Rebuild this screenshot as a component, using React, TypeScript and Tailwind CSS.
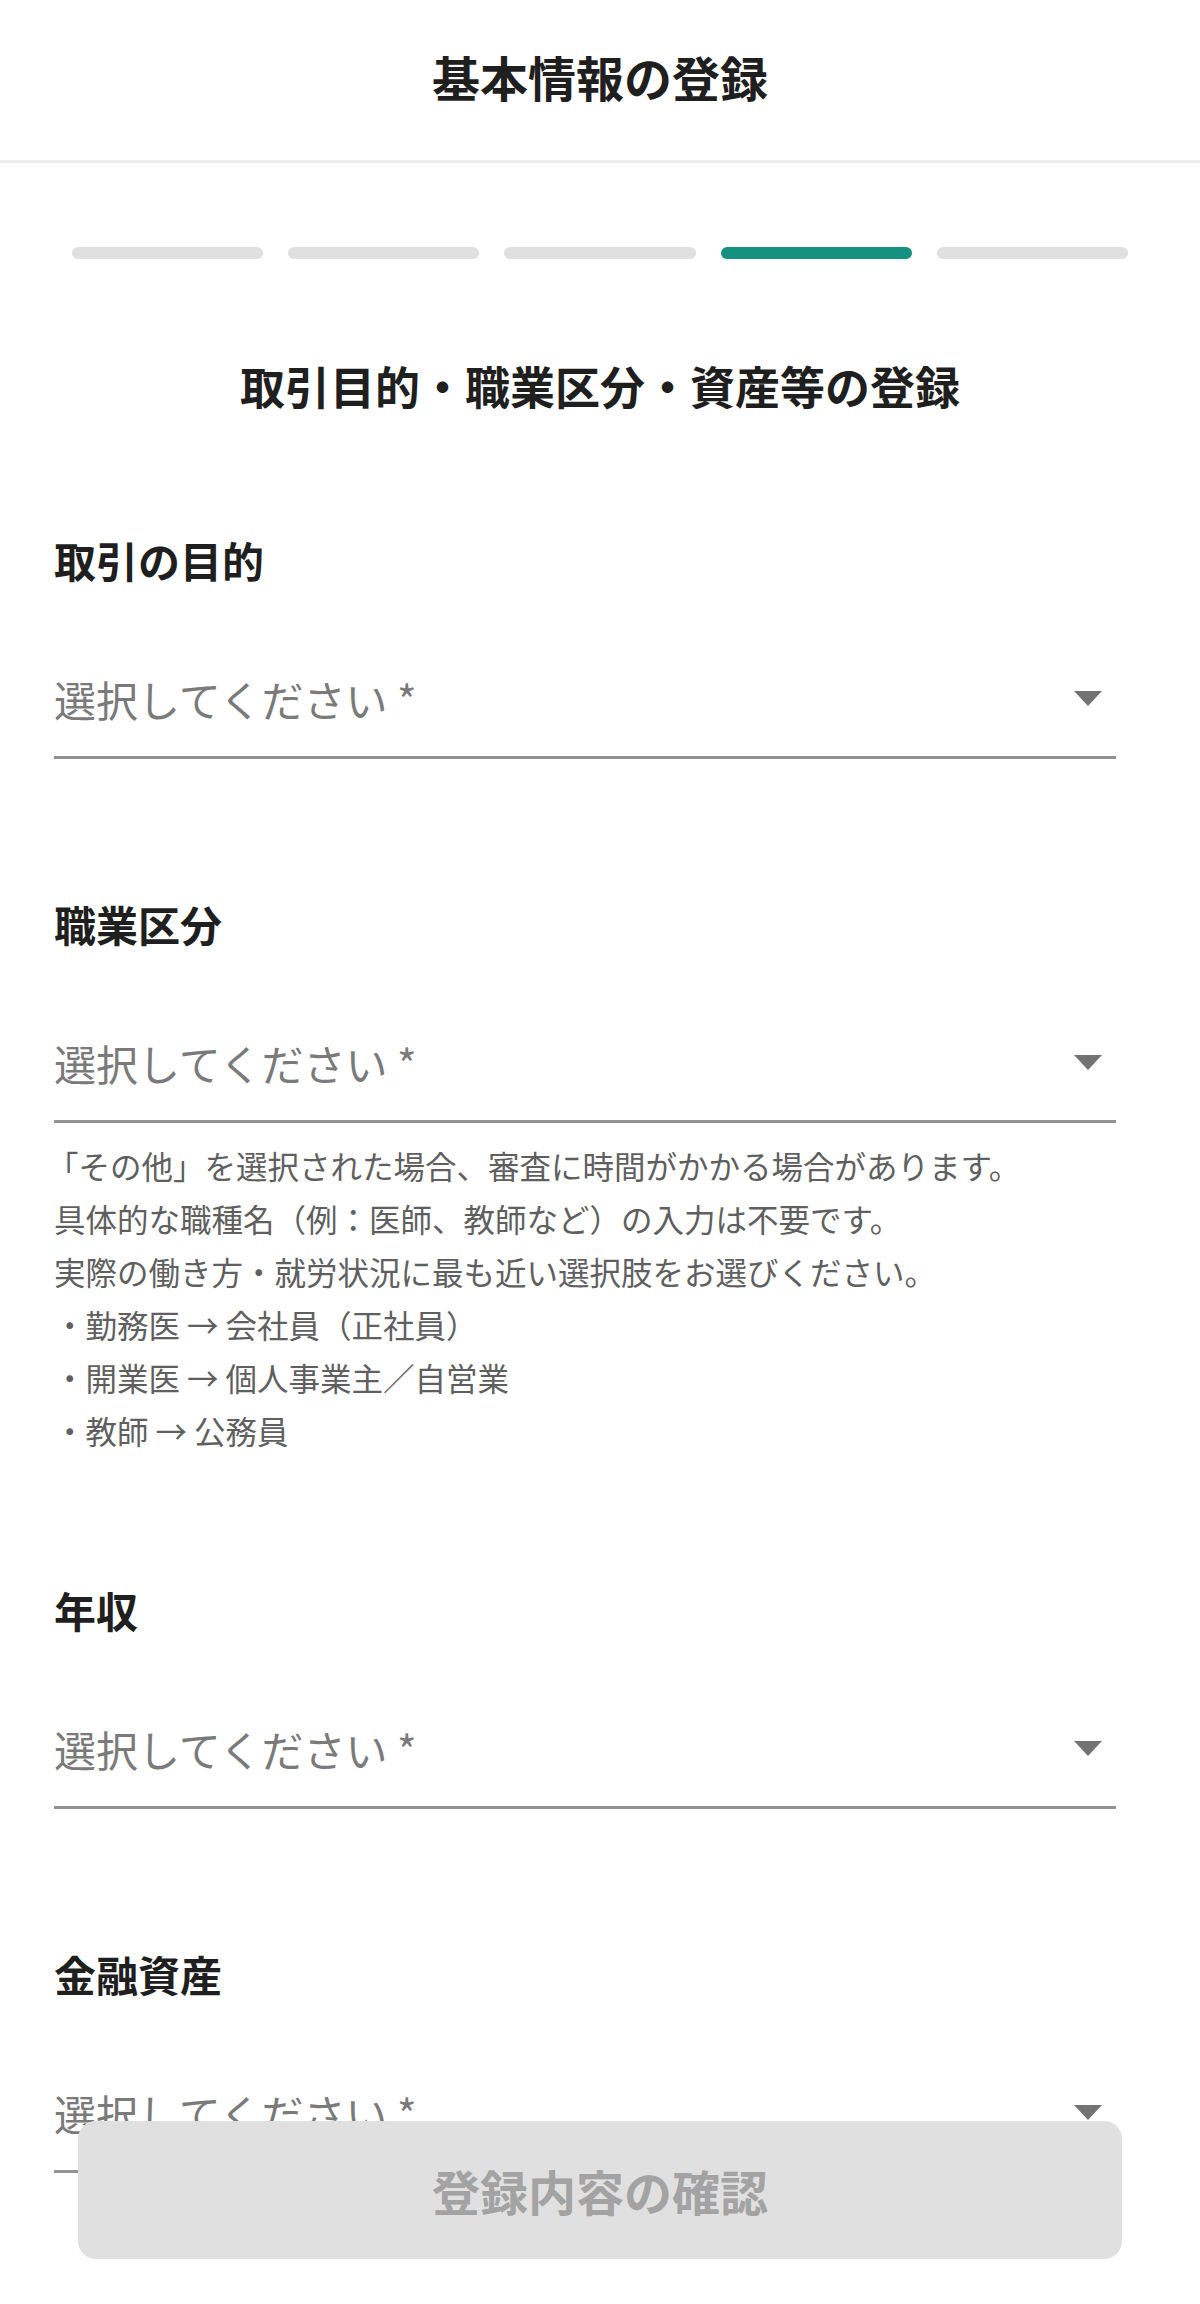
import React from "react";

const FONT = "font-[family-name:'Noto_Sans_CJK_JP','Noto_Sans',sans-serif]";

const STEPS = [false, false, false, true, false];

function SelectField({ mt }: { mt: string }) {
  return (
    <div className={`${mt} flex items-center justify-between border-b-[3px] border-[#929292] pb-[26px]`}>
      <span className="text-[42px] leading-[63px] text-[#7a7a7a]">選択してください *</span>
      <svg width="28" height="15" viewBox="0 0 28 15" className="mr-[14px]">
        <path d="M0 0 H28 L14 15 Z" fill="#737373" />
      </svg>
    </div>
  );
}

function Label({ text, mt }: { text: string; mt: string }) {
  return <h3 className={`${mt} text-[42px] leading-[60px] font-bold text-[#1f1f1f]`}>{text}</h3>;
}

export default function App() {
  return (
    <div className={`${FONT} min-h-screen bg-white`}>
      {/* header */}
      <header className="h-[163px] border-b-[3px] border-[#ebebeb] pb-[8px] flex items-center justify-center">
        <h1 className="text-[48px] leading-[72px] font-bold text-[#1f1f1f]">基本情報の登録</h1>
      </header>

      {/* progress */}
      <div className="mt-[84px] px-[72px] flex gap-[25px]">
        {STEPS.map((active, i) => (
          <div
            key={i}
            className={`flex-1 h-[12px] rounded-full ${active ? "bg-[#17917f]" : "bg-[#e0e0e0]"}`}
          />
        ))}
      </div>

      <h2 className="mt-[94px] text-center text-[45px] leading-[66px] font-bold text-[#1f1f1f]">
        取引目的・職業区分・資産等の登録
      </h2>

      <div className="pl-[54px] pr-[84px]">
        <Label text="取引の目的" mt="mt-[111px]" />
        <SelectField mt="mt-[77px]" />

        <Label text="職業区分" mt="mt-[135px]" />
        <SelectField mt="mt-[77px]" />
        <div className="mt-[16px] text-[31.5px] leading-[53px] text-[#5f5f5f]">
          <p className="-ml-[7px]">「その他」を選択された場合、審査に時間がかかる場合があります。</p>
          <p>具体的な職種名（例：医師、教師など）の入力は不要です。</p>
          <p>実際の働き方・就労状況に最も近い選択肢をお選びください。</p>
          <p>・勤務医 → 会社員（正社員）</p>
          <p>・開業医 → 個人事業主／自営業</p>
          <p>・教師 → 公務員</p>
        </div>

        <Label text="年収" mt="mt-[123px]" />
        <SelectField mt="mt-[77px]" />

        <Label text="金融資産" mt="mt-[135px]" />
        <SelectField mt="mt-[77px]" />
      </div>

      {/* bottom action */}
      <button
        disabled
        className="fixed left-[78px] right-[78px] bottom-[45px] h-[138px] rounded-[18px] bg-[#e0e0e0] text-[48px] font-bold text-[#a3a3a3] flex items-center justify-center"
      >
        登録内容の確認
      </button>
    </div>
  );
}
